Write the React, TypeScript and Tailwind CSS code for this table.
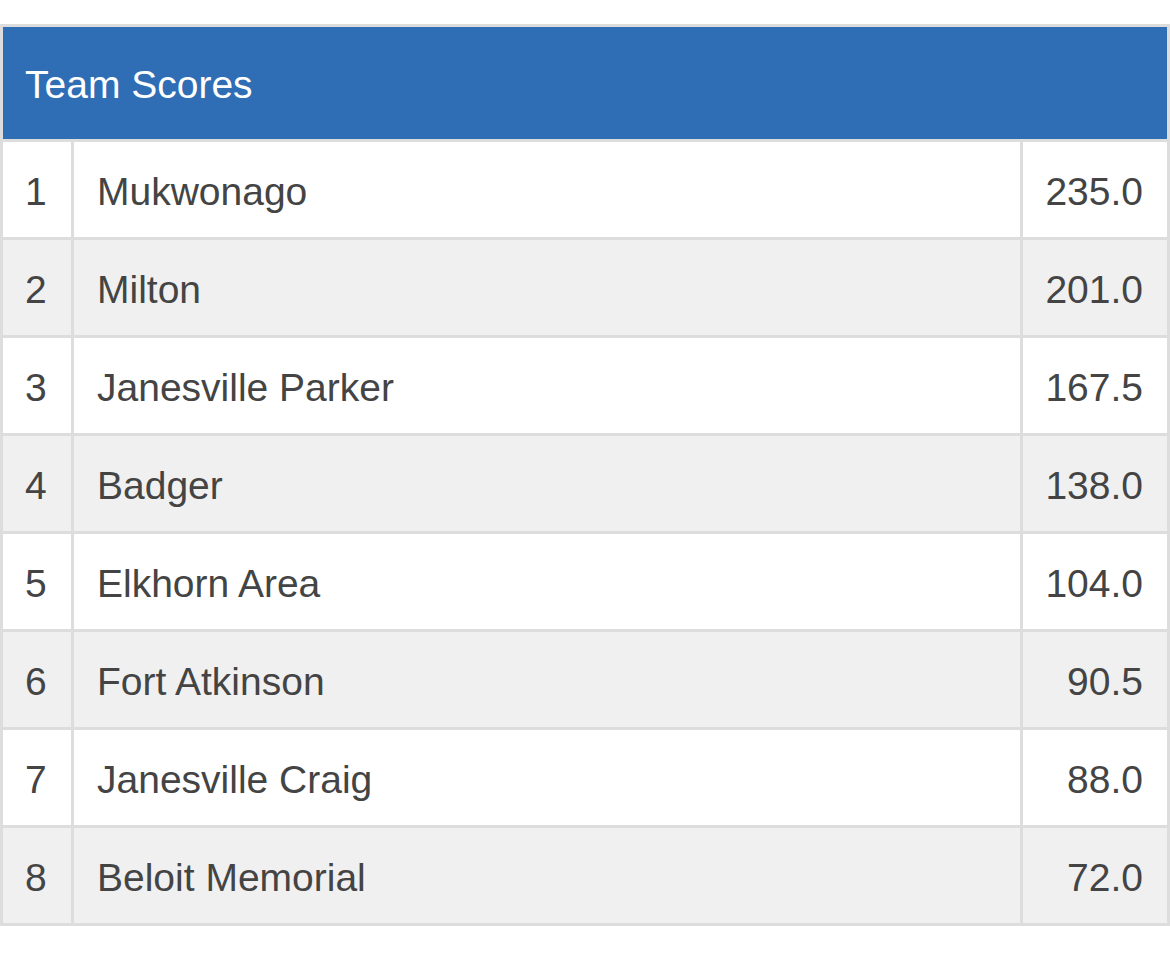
import React from "react";

// 팀 점수 목록
const TEAMS = [
    { rank: 1, name: "Mukwonago", score: "235.0" },
    { rank: 2, name: "Milton", score: "201.0" },
    { rank: 3, name: "Janesville Parker", score: "167.5" },
    { rank: 4, name: "Badger", score: "138.0" },
    { rank: 5, name: "Elkhorn Area", score: "104.0" },
    { rank: 6, name: "Fort Atkinson", score: "90.5" },
    { rank: 7, name: "Janesville Craig", score: "88.0" },
    { rank: 8, name: "Beloit Memorial", score: "72.0" },
];

const App = () => {
    return (
        <div
            className="min-h-screen bg-white pt-[24px]"
            style={{ fontFamily: '"Liberation Sans", Arial, Helvetica, sans-serif' }}
        >
            <div className="border-[3px] border-[#dddddd]">
                {/* 헤더 */}
                <div className="flex h-[115px] items-center bg-[#2f6db4] px-[22px] pt-[5px] border-b-[3px] border-[#dddddd]">
                    <span className="text-[39px] text-white">Team Scores</span>
                </div>

                {/* 점수 행 */}
                {TEAMS.map((team, index) => (
                    <div
                        key={team.rank}
                        className={`flex text-[39px] text-[#444444] ${
                            index % 2 === 0 ? "bg-white" : "bg-[#f0f0f0]"
                        } ${index < TEAMS.length - 1 ? "h-[98px] border-b-[3px] border-[#dddddd]" : "h-[95px]"}`}
                    >
                        <div className="flex w-[71px] shrink-0 items-center border-r-[3px] border-[#dddddd] pl-[22px] pt-[5px]">
                            {team.rank}
                        </div>
                        <div className="flex flex-1 items-center border-r-[3px] border-[#dddddd] pl-[23px] pt-[5px]">
                            {team.name}
                        </div>
                        <div className="flex w-[144px] shrink-0 items-center justify-end pr-[24px] pt-[5px]">
                            {team.score}
                        </div>
                    </div>
                ))}
            </div>
        </div>
    );
};

export default App;
